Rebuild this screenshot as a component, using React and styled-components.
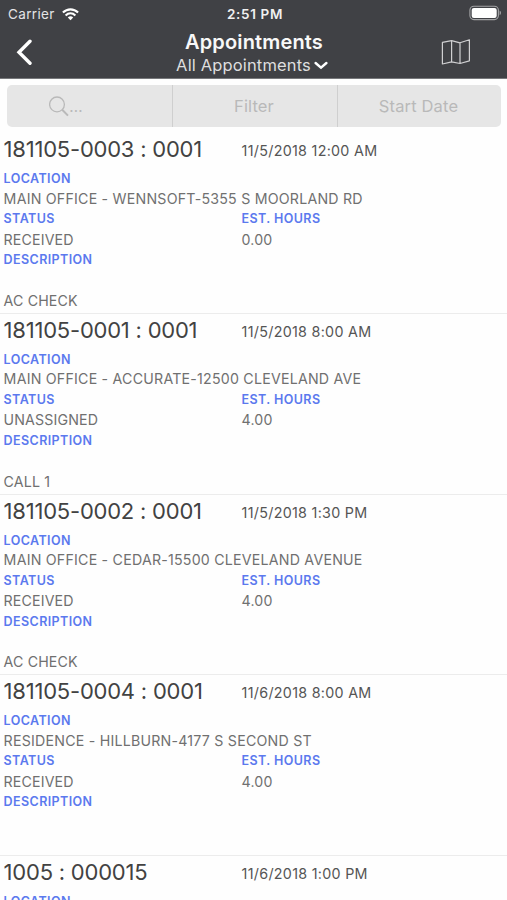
import React from 'react';
import styled, { createGlobalStyle } from 'styled-components';

const GlobalStyle = createGlobalStyle`
  * { box-sizing: border-box; }
  html, body { margin: 0; padding: 0; overflow: hidden; }
  body { background: #fff; font-family: Inter, "Liberation Sans", sans-serif; }
`;

const Screen = styled.div`
  width: 507px;
  height: 900px;
  overflow: hidden;
  display: flex;
  flex-direction: column;
  background: #fefefe;
`;

const Header = styled.header`
  flex: none;
  height: 79px;
  background: #404145;
  border-bottom: 1px solid #77787b;
  color: #fff;
`;

const StatusBar = styled.div`
  height: 28px;
  display: grid;
  grid-template-columns: 1fr auto 1fr;
  align-items: center;
  padding: 0 5px 0 8px;
`;

const Carrier = styled.div`
  display: flex;
  align-items: center;
  gap: 7px;
  font-size: 13.5px;
  line-height: 28px;
  letter-spacing: 0.35px;
  color: #e4e4e5;
`;

const Clock = styled.div`
  font-size: 13.5px;
  font-weight: 600;
  line-height: 28px;
  letter-spacing: 0.65px;
  color: #f0f0f0;
`;

const BatterySlot = styled.div`
  display: flex;
  justify-content: flex-end;
  height: 28px;
  padding-top: 5px;
`;

const NavBar = styled.nav`
  height: 50px;
  display: grid;
  grid-template-columns: 100px 1fr 100px;
`;

const NavButton = styled.button`
  border: 0;
  background: none;
  display: flex;
  align-items: flex-start;
  justify-content: ${(p) => p.$side};
  padding: ${(p) => p.$pad};
`;

const Titles = styled.div`
  display: flex;
  flex-direction: column;
  align-items: center;
`;

const Title = styled.h1`
  margin: 2px 0 0 1px;
  font-size: 20px;
  line-height: 25px;
  font-weight: 600;
  letter-spacing: 0.15px;
  color: #f8f8f8;
`;

const Subtitle = styled.div`
  display: flex;
  align-items: center;
  gap: 3px;
  height: 20px;
  font-size: 16.5px;
  line-height: 20px;
  letter-spacing: 0.15px;
  color: #dededf;
  margin-right: 3px;
`;

const FilterBar = styled.div`
  flex: none;
  display: grid;
  grid-template-columns: 165px 165px 1fr;
  height: 42px;
  margin: 6px 6px 6px 7px;
  border-radius: 5px;
  background: #e6e6e6;
  overflow: hidden;
`;

const FilterCell = styled.div`
  display: flex;
  align-items: center;
  justify-content: center;
  font-size: 16.5px;
  letter-spacing: 0.15px;
  color: #b9b9b9;
  padding-right: ${(p) => p.$shift || 0}px;
  & + & { border-left: 1px solid #cfcfcf; }
`;

const SearchHint = styled.span`
  display: flex;
  align-items: center;
  font-size: 15px;
`;

const List = styled.main`
  flex: none;
`;

const Appointment = styled.article`
  height: 180.8px;
  padding-left: 3.6px;
  border-bottom: 1px solid #ececec;
  display: grid;
  grid-template-columns: 238px 1fr;
  grid-template-rows: 36px 20px 20px 20px 21px 20px 1fr;
  align-items: center;
`;

const Code = styled.div`
  font-size: 22px;
  line-height: 28px;
  margin-top: -4px;
  letter-spacing: -0.22px;
  color: #424242;
  white-space: nowrap;
`;

const When = styled.div`
  font-size: 14.3px;
  line-height: 20px;
  letter-spacing: 0.29px;
  color: #555;
`;

const Label = styled.div`
  grid-column: ${(p) => (p.$wide ? '1 / -1' : 'auto')};
  font-size: 12.5px;
  line-height: 20px;
  font-weight: 600;
  letter-spacing: 0.4px;
  color: #5b79ee;
`;

const Value = styled.div`
  grid-column: ${(p) => (p.$wide ? '1 / -1' : 'auto')};
  font-size: 14.2px;
  line-height: 20px;
  letter-spacing: 0.14px;
  color: #707070;
  white-space: nowrap;
`;

const Address = styled(Value)`
  letter-spacing: 0.22px;
  margin-top: -1px;
`;

const Description = styled(Value)`
  align-self: end;
  margin-bottom: 2px;
`;

const WifiIcon = () => (
  <svg width="17" height="13" viewBox="0 0 17 13" fill="none" stroke="#fff" strokeWidth="2.1">
    <path d="M.9 4.6C5.3.3 11.7.3 16.1 4.6" />
    <path d="M3.6 7.4C6.5 4.7 10.5 4.7 13.4 7.4" />
    <path d="M5.8 9.4C7.5 8 9.5 8 11.2 9.4L8.5 12.3Z" fill="#fff" stroke="none" />
  </svg>
);

const BatteryIcon = () => (
  <svg width="33" height="16" viewBox="0 0 33 16">
    <rect x=".9" y="1.2" width="28.5" height="13.4" rx="4" fill="none" stroke="#a2a3a5" strokeWidth="1.1" />
    <rect x="2.7" y="2.9" width="25" height="10" rx="2.2" fill="#fff" />
    <path d="M30.6 5.6C32.5 6.4 32.5 9.4 30.6 10.2Z" fill="#a2a3a5" />
  </svg>
);

const BackIcon = () => (
  <svg width="18" height="28" viewBox="0 0 18 28" fill="none" stroke="#fff" strokeWidth="3.4" strokeLinecap="round" strokeLinejoin="miter">
    <path d="M16 3.2L5 14.2L16 25.2" />
  </svg>
);

const MapIcon = () => (
  <svg width="30" height="28" viewBox="0 0 30 28" fill="none" stroke="#d0d0d2" strokeWidth="1.2" strokeLinejoin="round">
    <path d="M1.4 4.4L10.6 2.6L19 4.8L28.4 1.8V22.8L19 25.5L10.6 23.8L1.4 26ZM10.6 2.6V23.8M19 4.8V25.5" />
  </svg>
);

const ChevronIcon = () => (
  <svg width="14" height="9" viewBox="0 0 14 9" fill="none" stroke="#fff" strokeWidth="2.4" strokeLinecap="round">
    <path d="M1.6 2L7 6.6L12.4 2" />
  </svg>
);

const SearchIcon = () => (
  <svg width="20" height="21" viewBox="0 0 20 21" fill="none" stroke="#b9b9b9">
    <circle cx="8" cy="8.4" r="7.4" strokeWidth="1.3" />
    <path d="M13.2 13.8L19 19.6" strokeWidth="2" />
  </svg>
);

const appointments = [
  { code: '181105-0003 : 0001', when: '11/5/2018 12:00 AM', location: 'MAIN OFFICE - WENNSOFT-5355 S MOORLAND RD', status: 'RECEIVED', hours: '0.00', description: 'AC CHECK' },
  { code: '181105-0001 : 0001', when: '11/5/2018 8:00 AM', location: 'MAIN OFFICE - ACCURATE-12500 CLEVELAND AVE', status: 'UNASSIGNED', hours: '4.00', description: 'CALL 1' },
  { code: '181105-0002 : 0001', when: '11/5/2018 1:30 PM', location: 'MAIN OFFICE - CEDAR-15500 CLEVELAND AVENUE', status: 'RECEIVED', hours: '4.00', description: 'AC CHECK' },
  { code: '181105-0004 : 0001', when: '11/6/2018 8:00 AM', location: 'RESIDENCE - HILLBURN-4177 S SECOND ST', status: 'RECEIVED', hours: '4.00', description: '' },
  { code: '1005 : 000015', when: '11/6/2018 1:00 PM' },
];

export default function App() {
  return (
    <Screen>
      <GlobalStyle />
      <Header>
        <StatusBar>
          <Carrier>Carrier <WifiIcon /></Carrier>
          <Clock>2:51 PM</Clock>
          <BatterySlot><BatteryIcon /></BatterySlot>
        </StatusBar>
        <NavBar>
          <NavButton $side="flex-start" $pad="10px 0 0 14px" aria-label="Back"><BackIcon /></NavButton>
          <Titles>
            <Title>Appointments</Title>
            <Subtitle>All Appointments <ChevronIcon /></Subtitle>
          </Titles>
          <NavButton $side="flex-end" $pad="10px 36px 0 0" aria-label="Map"><MapIcon /></NavButton>
        </NavBar>
      </Header>
      <FilterBar>
        <FilterCell $shift={47}><SearchHint><SearchIcon />...</SearchHint></FilterCell>
        <FilterCell $shift={2}>Filter</FilterCell>
        <FilterCell $shift={2}>Start Date</FilterCell>
      </FilterBar>
      <List>
        {appointments.map((a) => (
          <Appointment key={a.code}>
            <Code>{a.code}</Code>
            <When>{a.when}</When>
            <Label $wide>LOCATION</Label>
            {a.location && (
              <>
                <Address $wide>{a.location}</Address>
                <Label>STATUS</Label>
                <Label>EST. HOURS</Label>
                <Value>{a.status}</Value>
                <Value>{a.hours}</Value>
                <Label $wide>DESCRIPTION</Label>
                <Description $wide>{a.description}</Description>
              </>
            )}
          </Appointment>
        ))}
      </List>
    </Screen>
  );
}
